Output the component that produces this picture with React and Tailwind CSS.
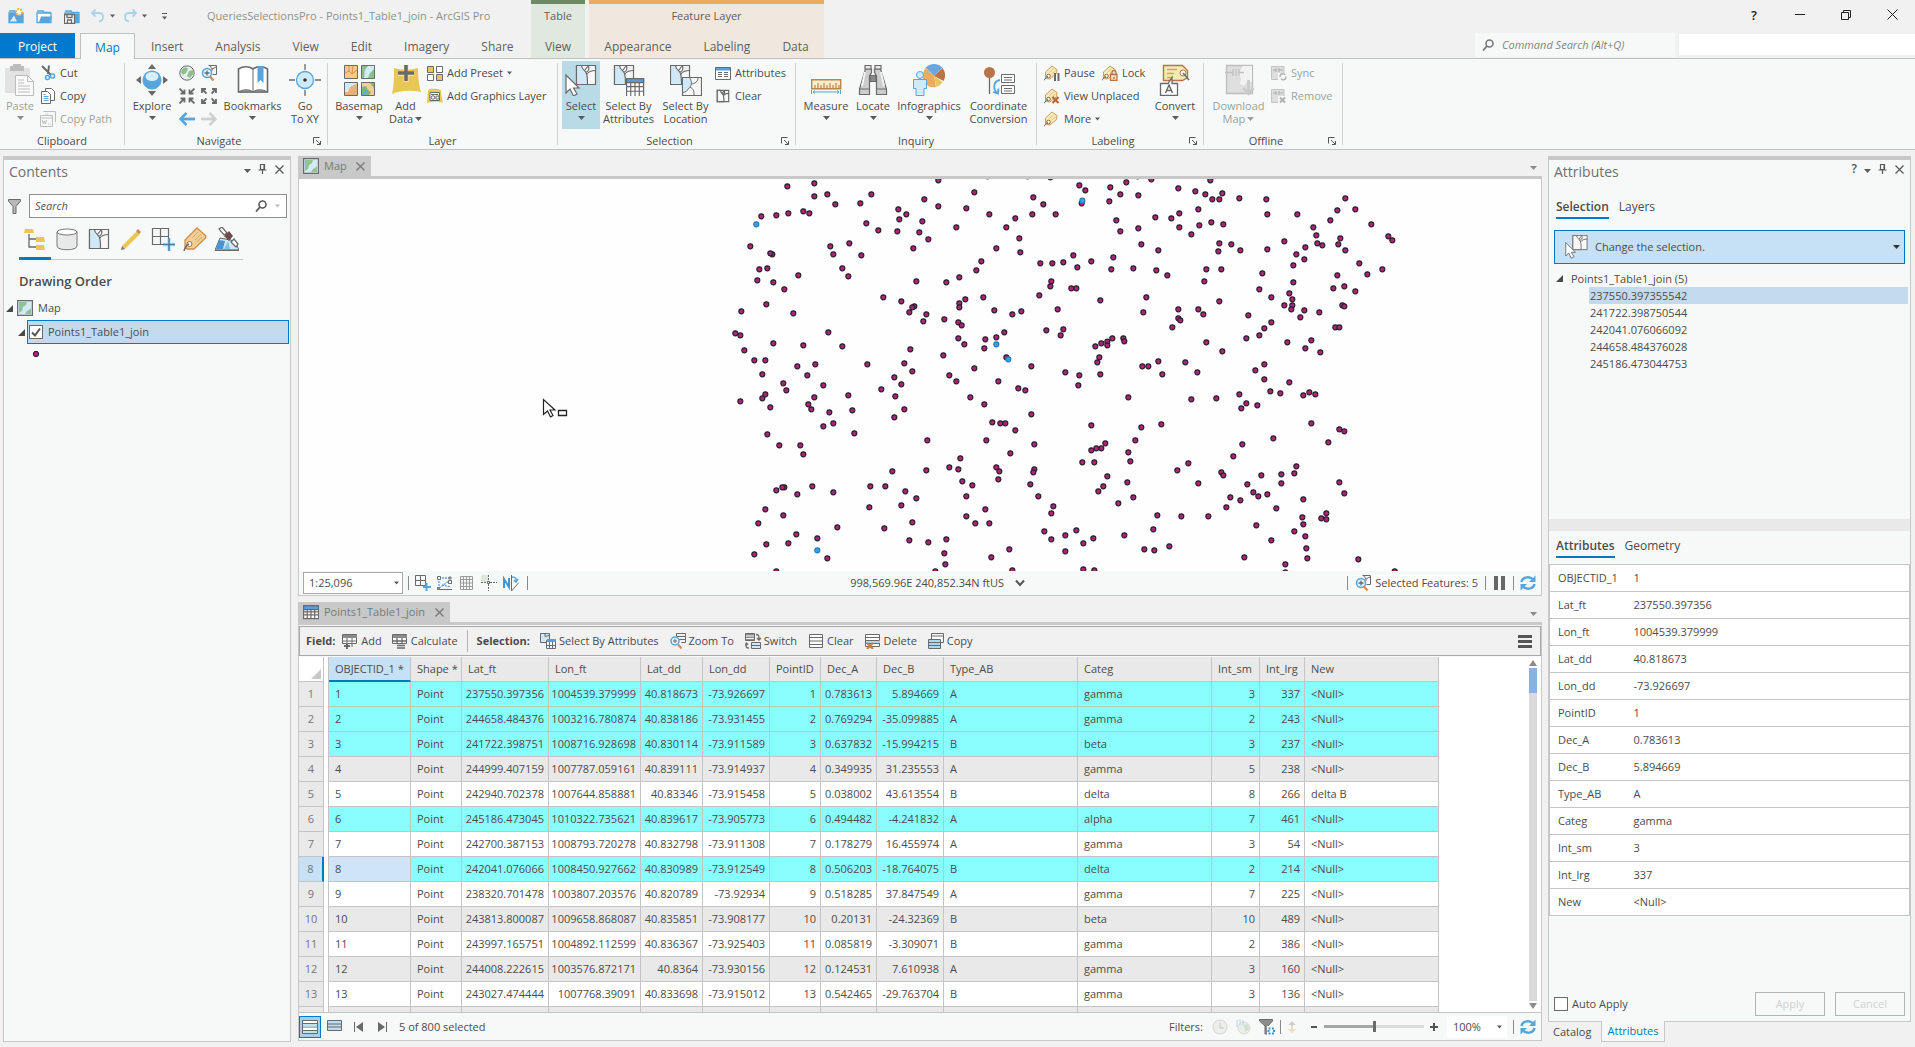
import { useState } from "react";

const INK = "#6a6a6a";
const BLUE = "#56a5dc";
const PALE = "#d0e9f8";

/* ---------- data ---------- */

const columns = [
  { name: "OBJECTID_1", star: true, width: 82 },
  { name: "Shape", star: true, width: 51 },
  { name: "Lat_ft", width: 87, num: true },
  { name: "Lon_ft", width: 92, num: true },
  { name: "Lat_dd", width: 62, num: true },
  { name: "Lon_dd", width: 67, num: true },
  { name: "PointID", width: 51, num: true },
  { name: "Dec_A", width: 56, num: true },
  { name: "Dec_B", width: 67, num: true },
  { name: "Type_AB", width: 134 },
  { name: "Categ", width: 134 },
  { name: "Int_sm", width: 48, num: true },
  { name: "Int_lrg", width: 45, num: true },
  { name: "New", width: 134 },
];

const rows = [
  ["1", "Point", "237550.397356", "1004539.379999", "40.818673", "-73.926697", "1", "0.783613", "5.894669", "A", "gamma", "3", "337", "<Null>"],
  ["2", "Point", "244658.484376", "1003216.780874", "40.838186", "-73.931455", "2", "0.769294", "-35.099885", "A", "gamma", "2", "243", "<Null>"],
  ["3", "Point", "241722.398751", "1008716.928698", "40.830114", "-73.911589", "3", "0.637832", "-15.994215", "B", "beta", "3", "237", "<Null>"],
  ["4", "Point", "244999.407159", "1007787.059161", "40.839111", "-73.914937", "4", "0.349935", "31.235553", "A", "gamma", "5", "238", "<Null>"],
  ["5", "Point", "242940.702378", "1007644.858881", "40.83346", "-73.915458", "5", "0.038002", "43.613554", "B", "delta", "8", "266", "delta B"],
  ["6", "Point", "245186.473045", "1010322.735621", "40.839617", "-73.905773", "6", "0.494482", "-4.241832", "A", "alpha", "7", "461", "<Null>"],
  ["7", "Point", "242700.387153", "1008793.720278", "40.832798", "-73.911308", "7", "0.178279", "16.455974", "A", "gamma", "3", "54", "<Null>"],
  ["8", "Point", "242041.076066", "1008450.927662", "40.830989", "-73.912549", "8", "0.506203", "-18.764075", "B", "delta", "2", "214", "<Null>"],
  ["9", "Point", "238320.701478", "1003807.203576", "40.820789", "-73.92934", "9", "0.518285", "37.847549", "A", "gamma", "7", "225", "<Null>"],
  ["10", "Point", "243813.800087", "1009658.868087", "40.835851", "-73.908177", "10", "0.20131", "-24.32369", "B", "beta", "10", "489", "<Null>"],
  ["11", "Point", "243997.165751", "1004892.112599", "40.836367", "-73.925403", "11", "0.085819", "-3.309071", "B", "gamma", "2", "386", "<Null>"],
  ["12", "Point", "244008.222615", "1003576.872171", "40.8364", "-73.930156", "12", "0.124531", "7.610938", "A", "gamma", "3", "160", "<Null>"],
  ["13", "Point", "243027.474444", "1007768.39091", "40.833698", "-73.915012", "13", "0.542465", "-29.763704", "B", "gamma", "3", "136", "<Null>"],
];

const selectedRows = [1, 2, 3, 6, 8];
const selectedIds = ["237550.397355542", "241722.398750544", "242041.076066092", "244658.484376028", "245186.473044753"];

const attributes = [
  ["OBJECTID_1", "1"],
  ["Lat_ft", "237550.397356"],
  ["Lon_ft", "1004539.379999"],
  ["Lat_dd", "40.818673"],
  ["Lon_dd", "-73.926697"],
  ["PointID", "1"],
  ["Dec_A", "0.783613"],
  ["Dec_B", "5.894669"],
  ["Type_AB", "A"],
  ["Categ", "gamma"],
  ["Int_sm", "3"],
  ["Int_lrg", "337"],
  ["New", "<Null>"],
];

// point positions, three units per screen pixel
const westPoints = [
  [202, 49], [283, 40], [322, 73], [283, 79], [346, 103], [250, 124], [268, 130], [205, 130], [169, 136], [124, 139],
  [454, 73], [421, 100], [439, 160], [475, 181], [91, 229], [157, 253], [151, 250], [142, 295], [118, 298], [112, 331],
  [160, 337], [193, 358], [235, 316], [331, 229], [388, 220], [340, 253], [424, 256], [367, 295], [385, 319], [139, 403],
  [64, 424], [220, 430], [46, 490], [61, 496], [325, 487], [160, 520], [250, 526], [367, 529], [73, 541], [103, 571],
  [136, 571], [127, 613], [232, 589], [286, 583], [262, 616], [310, 646], [190, 640], [199, 661], [136, 673], [127, 685],
  [151, 712], [61, 694], [283, 682], [265, 703], [274, 718], [328, 727], [385, 676], [397, 721], [340, 760], [310, 769],
  [403, 790], [142, 793], [178, 826], [241, 826], [250, 853], [277, 949], [340, 967], [232, 973], [193, 952], [187, 952],
  [169, 961], [136, 1018], [190, 1036], [115, 1060], [229, 1093], [205, 1120], [139, 1123], [103, 1153], [292, 1105], [352, 1072],
  [322, 1165], [169, 1204], [655, 31], [613, 88], [655, 109], [535, 118], [559, 133], [538, 148], [607, 154], [532, 184],
  [598, 187], [625, 208], [580, 235], [763, 67], [739, 115], [808, 133], [709, 172], [886, 145], [859, 172], [940, 82],
  [970, 103], [937, 133], [1007, 133], [898, 205], [901, 247], [829, 235], [784, 274], [769, 301], [718, 322], [679, 337],
  [589, 334], [961, 280], [997, 280], [994, 334], [991, 349], [958, 376], [1013, 418], [490, 382], [544, 394], [583, 409],
  [577, 412], [568, 427], [619, 433], [610, 454], [673, 448], [736, 388], [718, 400], [718, 412], [790, 382], [823, 421],
  [877, 433], [904, 424], [715, 457], [725, 466], [715, 505], [733, 523], [796, 508], [829, 502], [853, 487], [793, 535],
  [979, 481], [571, 538], [553, 580], [577, 604], [523, 622], [544, 643], [442, 583], [484, 658], [526, 679], [553, 718],
  [523, 742], [670, 556], [688, 616], [709, 634], [763, 595], [859, 562], [835, 634], [895, 655], [916, 661], [934, 589],
  [751, 682], [793, 703], [934, 733], [817, 757], [841, 760], [856, 760], [886, 781], [799, 811], [943, 823], [871, 850],
  [622, 811], [721, 865], [688, 892], [715, 898], [619, 901], [517, 904], [829, 892], [838, 904], [835, 928], [727, 934],
  [757, 946], [739, 979], [943, 898], [940, 907], [931, 943], [955, 979], [1000, 1009], [994, 1030], [973, 1084], [994, 1108],
  [451, 949], [496, 949], [556, 964], [589, 985], [544, 1006], [448, 1012], [577, 1057], [493, 1075], [568, 1111], [625, 1117],
  [679, 1108], [673, 1150], [676, 1183], [646, 1204], [796, 1018], [739, 1039], [766, 1060], [808, 1060], [868, 1138], [814, 1162],
  [877, 1201], [991, 22], [803, 19], [923, 19],
];

const eastPoints = [
  [58, 46], [76, 61], [65, 100], [151, 52], [199, 37], [181, 73], [148, 94], [235, 76], [274, 28], [355, 55],
  [406, 64], [436, 73], [451, 31], [457, 88], [478, 88], [487, 70], [538, 85], [619, 88], [622, 133], [712, 133],
  [415, 118], [358, 130], [334, 145], [286, 142], [169, 151], [181, 184], [235, 175], [358, 172], [418, 166], [454, 157],
  [490, 163], [394, 193], [244, 223], [295, 241], [478, 220], [475, 244], [514, 223], [541, 241], [622, 238], [673, 214],
  [856, 85], [886, 118], [832, 121], [811, 151], [934, 163], [985, 199], [997, 211], [760, 172], [769, 196], [772, 220],
  [787, 226], [841, 205], [835, 223], [856, 241], [736, 232], [709, 253], [733, 268], [700, 286], [898, 280], [967, 298],
  [922, 313], [832, 316], [853, 349], [820, 355], [886, 364], [40, 256], [10, 277], [52, 292], [94, 274], [160, 262],
  [154, 298], [220, 295], [289, 301], [322, 316], [439, 298], [484, 298], [433, 334], [607, 310], [598, 358], [700, 337],
  [688, 370], [697, 388], [697, 406], [694, 418], [673, 406], [634, 382], [733, 421], [721, 442], [778, 427], [847, 406],
  [853, 409], [826, 472], [838, 472], [34, 355], [49, 355], [121, 391], [259, 382], [250, 427], [478, 394], [415, 418],
  [430, 433], [355, 418], [355, 445], [361, 451], [337, 472], [565, 436], [634, 457], [613, 475], [598, 496], [559, 505],
  [682, 517], [754, 511], [736, 535], [781, 547], [10, 478], [2, 496], [157, 505], [142, 515], [142, 526], [124, 520],
  [106, 529], [190, 505], [193, 514], [118, 562], [112, 577], [121, 613], [247, 589], [265, 589], [295, 574], [307, 613],
  [376, 577], [412, 607], [439, 517], [487, 544], [16, 607], [58, 616], [55, 646], [205, 682], [613, 583], [586, 601],
  [613, 628], [631, 664], [661, 670], [688, 637], [730, 676], [748, 667], [766, 673], [538, 673], [559, 700], [544, 715],
  [592, 706], [394, 688], [469, 685], [94, 766], [244, 772], [304, 763], [226, 811], [136, 820], [124, 835], [109, 835],
  [94, 841], [205, 847], [211, 874], [67, 877], [103, 877], [547, 823], [640, 805], [520, 859], [754, 760], [838, 778],
  [853, 784], [805, 817], [142, 919], [130, 949], [115, 964], [202, 937], [220, 982], [175, 1000], [352, 901], [385, 880],
  [415, 940], [484, 907], [490, 916], [604, 916], [664, 913], [703, 910], [709, 889], [664, 940], [562, 943], [580, 967],
  [595, 979], [622, 973], [511, 982], [541, 991], [499, 1012], [649, 1015], [730, 988], [838, 937], [853, 970], [727, 1042],
  [730, 1063], [703, 1084], [736, 1099], [739, 1135], [742, 1165], [784, 1045], [799, 1030], [799, 1048], [589, 1066], [634, 1111],
  [292, 1036], [364, 1039], [445, 1039], [280, 1078], [193, 1096], [253, 1138], [283, 1141], [328, 1129], [553, 1162], [676, 1183],
  [676, 1207], [895, 1168], [1004, 1204], [49, 1081], [16, 1096], [100, 1105], [70, 1120], [16, 1144], [70, 1198], [103, 1201],
  [233, 19],
];

/* ---------- icons ---------- */

function Icon({ size = 16, box = 16, className = "", children }) {
  return (
    <svg width={size} height={size} viewBox={`0 0 ${box} ${box}`} fill="none" className={`shrink-0 ${className}`} aria-hidden="true">
      {children}
    </svg>
  );
}

const Big = ({ children }) => <Icon size={32} box={32}>{children}</Icon>;

function Caret({ color = "#5a5a5a", className = "" }) {
  return (
    <svg width="7" height="4" viewBox="0 0 7 4" className={`shrink-0 ${className}`} aria-hidden="true">
      <path d="M0 0h7L3.5 4z" fill={color} />
    </svg>
  );
}

const MapShape = ({ x, y, w, fill = PALE }) => (
  <g transform={`translate(${x} ${y}) scale(${w / 20})`} stroke={INK} strokeWidth={(20 / w) * 1.2}>
    <path d="M.5.5h19v19H.5z" fill="#f7f7f7" />
    <path d="M.5.5h5c0 4 4 5 5 8s1 7 1 11H.5z" fill={fill} />
    <path d="M10.5 9.500c2-3 5-4 9-4M8.500 5.500l4-5M9.500 7c3 0 4-3 3-6" fill="none" />
  </g>
);

const GridShape = ({ x, y, w = 17, h = 18, head = "#5b9bd8" }) => (
  <g transform={`translate(${x} ${y})`} stroke={INK} strokeWidth="1.2">
    <path d={`M.6.6h${w}v${h}H.6z`} fill="#fff" />
    <path d={`M.6.6h${w}v4H.6z`} fill={head} />
    <path d={`M.6 ${4 + (h - 4) * 0.33}h${w}M.6 ${4 + (h - 4) * 0.66}h${w}M${w * 0.28} 4.6v${h - 4}M${w * 0.53} 4.6v${h - 4}M${w * 0.78} 4.6v${h - 4}`} />
  </g>
);

const TagShape = () => (
  <>
    <path d="M1.5 13.5V7L8 1l5 3.500-.5 4L6 14z" fill="#f9e9b8" stroke="#d59a5a" />
    <path d="M5.5 7.500l4-3.500M7.500 9.500l4-3.500" stroke="#e4bd84" />
    <circle cx="4.5" cy="11" r="1.8" fill="#fff" stroke="#8a6a4a" />
    <path d="M0 15.5c1-2 2-3 4-4" stroke={INK} />
  </>
);

const ProjectIcon = ({ kind }) => (
  <Icon>
    <path d="M2 4V3h5l1 1.5h6V7" stroke={BLUE} strokeWidth="1.5" />
    <path d="M1 5h14v9.5H1z" fill={kind === "new" ? BLUE : "#fff"} stroke={BLUE} strokeWidth="1.3" />
    {kind === "new" && <><path d="M2 13.500l4-6 3 6z" fill="#d8eefb" /><circle cx="11" cy="4" r="3" fill="#fff" stroke="#eab73f" strokeWidth="2" strokeDasharray="2 1" /></>}
    {kind === "open" && <path d="M3 14.5l2-6h11l-2 6z" fill={BLUE} />}
    {kind === "save" && <><path d="M11 6h4v9h-4z" fill={BLUE} /><path d="M.5 6.5h10v9H.5zM3 6.5h5v3H3zM3.500 12h4v3.500h-4z" fill="#fff" stroke={INK} strokeWidth="1.3" /></>}
  </Icon>
);

const UndoIcon = ({ flip }) => (
  <Icon className={flip ? "-scale-x-100" : ""}>
    <path d="M5.5 1.500L2 5l3.500 3.500M2 5h7c3 0 4 2 4 4s-1 4-4 4.500" stroke="#a9d3e8" strokeWidth="1.8" />
  </Icon>
);

const PasteIcon = () => (
  <Big>
    <path d="M1 4h25v25H1z" fill="#e2e2e2" />
    <path d="M6 2h3V0h8v2h3v5H6z" fill="#bdbdbd" />
    <path d="M11.5 11.5h12l6 6v14h-18z" fill="#fafafa" stroke="#bdbdbd" />
    <path d="M23.5 11.5v6h6M14 16h6M14 19h6M14 22h12M14 25h12M14 28h12" stroke="#bdbdbd" />
  </Big>
);
const CutIcon = () => (
  <Icon>
    <path d="M2 1l9 9M9 .5L8 9" stroke={INK} strokeWidth="2" />
    <circle cx="7.5" cy="12.5" r="2" stroke={BLUE} strokeWidth="1.5" />
    <circle cx="12.5" cy="11" r="2" stroke={BLUE} strokeWidth="1.5" />
  </Icon>
);
const CopyIcon = () => (
  <Icon>
    <path d="M5.5.5h6l3 3v9h-9z" fill="#fff" stroke={INK} />
    <path d="M1.5 3.5h6l3 3v9h-9z" fill="#fff" stroke={INK} />
    <path d="M3.5 8.5h5M3.5 10.5h5M3.5 12.5h5M3.5 6.5h2" stroke={BLUE} />
  </Icon>
);
const CopyPathIcon = () => (
  <Icon>
    <path d="M3.5.5h12v11M.5 4.5h12v11H.5zM.5 7h12" stroke="#bdbdbd" />
    <path d="M2.5 9l1 4 1-3 1 3 1-4M8 13h1M10 13h1" stroke="#bdbdbd" />
    <path d="M5 3h1M7 3h1" stroke="#bdbdbd" />
  </Icon>
);
const ExploreIcon = () => (
  <Big>
    <path d="M16 0l4 5h-8zM16 32l4-5h-8zM0 16l5-4v8zM32 16l-5-4v8z" fill={INK} />
    <circle cx="16" cy="16" r="9.5" fill={BLUE} />
    <ellipse cx="16" cy="12.5" rx="6.5" ry="4.5" fill="#d8effb" />
  </Big>
);
const GlobeIcon = () => (
  <Icon>
    <circle cx="8" cy="8" r="7.2" fill="#e6eef0" stroke={INK} />
    <path d="M3 4l4-2 2 2-2 4-3 2-2-3zM10 6l4-1v4l-3 4-3-2z" fill="#8fbd8c" />
  </Icon>
);
const ZoomSelIcon = () => (
  <Icon>
    <path d="M7.5.5h8v9h-4M9 1l2 3 4-2M11 4v2" stroke={INK} />
    <circle cx="6" cy="8" r="4.5" fill="#e5f3fb" stroke={BLUE} strokeWidth="1.5" />
    <path d="M3.5 8h5M6 5.5v5" stroke={INK} strokeWidth="1.3" />
    <path d="M9 11.500l3.500 4" stroke="#cf8d4a" strokeWidth="2.2" />
  </Icon>
);
const FixedZoomIcon = ({ out }) => (
  <Icon>
    {[0, 90, 180, 270].map((a) => (
      <g key={a} transform={`rotate(${a} 8 8)`} stroke={INK} strokeWidth="1.8">
        {out ? <path d="M5.5 5.500L1 1M1 5V1h4" /> : <path d="M.5.500L5.500 5.500M5.500 1.500v4h-4" />}
      </g>
    ))}
  </Icon>
);
const ArrowIcon = ({ color, flip }) => (
  <Icon className={flip ? "-scale-x-100" : ""}>
    <path d="M2 8h14" stroke={color} strokeWidth="2.8" />
    <path d="M7.5 2l-6 6 6 6" stroke={color} strokeWidth="2.5" />
  </Icon>
);
const BookIcon = () => (
  <Big>
    <path d="M1.5 5C6 2 12 2 16 5c4-3 10-3 14.5 0v23H1.5z" fill="#fff" stroke={INK} strokeWidth="1.6" />
    <path d="M1.5 28c5-3 11-3 14.5 0 3.500-3 9.500-3 14.500 0z" fill="#9b9b9b" stroke={INK} />
    <path d="M16 5v22" stroke={INK} />
    <path d="M20.5 2h6v17l-3-3-3 3z" fill={BLUE} />
  </Big>
);
const GoToIcon = () => (
  <Big>
    <path d="M16 0v6M16 26v6M0 16h6M26 16h6" stroke={INK} strokeWidth="1.3" />
    <circle cx="16" cy="16" r="8.5" fill={PALE} stroke={BLUE} strokeWidth="1.3" />
    <circle cx="16" cy="16" r="1.8" fill="#333" />
  </Big>
);
const BasemapIcon = () => (
  <Big>
    <g stroke={INK}>
      <path d="M1.5 1.5h13v13h-13z" fill="#f5c98d" />
      <path d="M18.5 1.5h13v13h-13z" fill="#d3ecfa" />
      <path d="M1.5 18.5h13v13h-13z" fill="#e5b083" />
      <path d="M18.5 18.5h13v13h-13z" fill="#f2cf8c" />
    </g>
    <path d="M2 9l4-2 3 3 5-4M6 2v5M10 2l-1 8" stroke="#df8f4a" />
    <path d="M19 2h6l-3 4-1 8h-2zM31 5v9h-6l2-5z" fill="#8cc08a" />
    <path d="M2 19h12l-3 2-4 2-2 5H2z" fill="#d3ecfa" />
    <path d="M19 23l4-1 2 4 3 2-2 3h-7zM27 19h4v5z" fill="#7db57c" />
    <path d="M19 31l5-5" stroke={BLUE} />
  </Big>
);
const AddDataIcon = () => (
  <Big>
    <path d="M4 4c8 2 15 2 24 0 0 10 1 18 3 24-10-2-20-2-29 2C4 22 4 12 4 4z" fill="#e9c757" />
    <path d="M16 1v17M8 9.500h16" stroke="#f3e2a6" strokeWidth="5" />
    <path d="M16 1v16M8 9h16" stroke={INK} strokeWidth="3.5" />
  </Big>
);
const PresetIcon = () => (
  <Icon>
    <g stroke={INK}>
      <path d="M.5 1.5h6v6h-6z" fill="#e9c757" /><path d="M9.5 1.5h6v6h-6z" fill="#fff" />
      <path d="M.5 9.5h6v6h-6z" fill="#fff" /><path d="M9.5 9.5h6v6h-6z" fill="#e9c757" />
    </g>
  </Icon>
);
const GraphicsLayerIcon = () => (
  <Icon>
    <path d="M1 2c5-2 9-1 13 0 0 5 1 9 2 13-6-2-10-1-16 0z" fill="#e9c757" />
    <path d="M3 4.5h9.5v8H3z" fill="#fff" stroke={INK} />
    <circle cx="6" cy="9.5" r="1.8" stroke={INK} /><path d="M9 8h3v3H9zM4 6.5h7" stroke={INK} />
  </Icon>
);
const Pointer = ({ x, y }) => (
  <path transform={`translate(${x} ${y})`} d="M0 0v18l4-4 3.500 7 3.500-2-3.500-6H13z" fill="#fff" stroke={INK} strokeWidth="1.2" />
);
const SelectIcon = () => <Big><MapShape x={11} y={1} w={20} /><Pointer x={1} y={11} /></Big>;
const SelectAttrIcon = () => <Big><MapShape x={1} y={1} w={20} /><GridShape x={13} y={14} /></Big>;
const SelectLocIcon = () => (
  <Big>
    <MapShape x={0} y={1} w={20} />
    <path d="M12.5 13.5h19v18h-19z" fill="#f7f7f7" stroke={INK} strokeWidth="1.2" />
    <path d="M12.5 13.5h7c3 4 2 8 0 10-2 3-4 5-7 5z" fill={PALE} stroke={INK} />
    <path d="M21 20c4 0 7-3 7-6M20 23c4 2 4 5 4 8" stroke={INK} />
  </Big>
);
const TableIcon = () => (
  <Icon>
    <path d="M.5 2.5h15v12H.5z" fill="#fff" stroke={INK} /><path d="M1 3h14v2.500H1z" fill="#5b9bd8" />
    <path d="M3 7.500h4M3 9.500h4M3 11.500h4M9 7.500h4M9 9.500h4M9 11.500h4" stroke={INK} />
  </Icon>
);
const GridIcon = () => <Icon><GridShape x={0} y={1} w={15} h={13} /></Icon>;
const ClearIcon = () => <Icon><MapShape x={2} y={2} w={12} fill="#f7f7f7" /></Icon>;
const MeasureIcon = () => (
  <Big>
    <path d="M1.7 15.7h29v9h-29z" fill="#fbeccb" stroke="#c08445" strokeWidth="1.4" />
    <path d="M5 24v-3M8 24v-5M11 24v-3M14 24v-5M17 24v-3M20 24v-5M23 24v-3M26 24v-5M29 24v-3" stroke="#a87038" />
    <path d="M1.5 26v4M30.5 26v4M3 28h26M5 26.500L3 28l2 1.500M27 26.500l2 1.500-2 1.500" stroke={BLUE} />
  </Big>
);
const LocateIcon = () => (
  <Big>
    <g stroke={INK} strokeWidth="1.2">
      <path d="M8.5 5l-6 20v5.500h10V12l2-3.500V5zM23.500 5l6 20v5.500h-10V12l-2-3.500V5z" fill="#cdcdcd" />
      <path d="M8 1.5h6V5H8zM18 1.5h6V5h-6zM2.5 25h10M19.5 25h10" fill="#e8e8e8" />
      <path d="M13 11.5h6v6h-6z" fill="#8a8a8a" />
    </g>
    <path d="M8 8L5 22M24 8l3 14" stroke="#f2f2f2" strokeWidth="2" />
  </Big>
);
const InfographicsIcon = () => (
  <Big>
    <path d="M21 12L12.5 3.500A12 12 0 0 1 29.500 3.500z" fill="#69a8de" />
    <path d="M21 12l8.500-8a12 12 0 0 1 1 13z" fill="#b87446" /><path d="M21 12l8.500 6a12 12 0 0 1-6 5z" fill="#e9c757" />
    <path d="M21 12l2 11a12 12 0 0 1-12-5c-2-5-1-10 1.500-14z" fill="#edab5e" />
    <circle cx="7" cy="11" r="3.5" fill={PALE} stroke={BLUE} />
    <path d="M.5 15.5h13v9h-2.500v7h-8v-7H.5z" fill={PALE} stroke={BLUE} />
  </Big>
);
const CoordIcon = () => (
  <Big>
    <circle cx="6.5" cy="8.5" r="5.5" fill="#b87446" /><path d="M6.5 14v16" stroke={INK} strokeWidth="1.3" />
    <path d="M17 16c-7 1-7 9-3 13M10 28l5 1.500.500-5" stroke={BLUE} strokeWidth="1.8" />
    <path d="M18.5 10.5h13v8h-13zM18.5 21.5h13v8h-13zM21 13.5h8M21 16h8M21 24.5h8M21 27h8" fill="#fff" stroke={INK} />
  </Big>
);
const LabelIcon = ({ kind }) => (
  <Icon>
    <TagShape />
    {kind === "pause" && <path d="M11 8v8M14.5 8v8" stroke={INK} strokeWidth="2" />}
    {kind === "lock" && <path d="M8.5 9.5h6.500v6H8.500zM10 9V7.500a2 2 0 0 1 4 0V9M12 12v2" fill="#f5dfba" stroke="#b87446" strokeWidth="1.3" />}
    {kind === "x" && <path d="M8.5 9l6 6M14.5 9l-6 6" stroke="#b5683a" strokeWidth="2.2" />}
  </Icon>
);
const ConvertIcon = () => (
  <Big>
    <path d="M4.5 1.5h19l5 5v7l-5 3h-19z" fill="#f6eab4" stroke="#b87446" strokeWidth="1.4" />
    <path d="M8 5.5h10M8 9.5h7M8 13.5h5" stroke="#e39a5b" strokeWidth="1.3" />
    <circle cx="24" cy="9" r="3" fill="#fff" stroke="#b87446" /><path d="M24 9l6 7" stroke={INK} strokeWidth="1.5" />
    <path d="M3 19.5h6l4-6v6h5.500v12H1.500v-12z" fill="#fff" stroke={INK} strokeWidth="1.3" />
    <path d="M6.5 29l3.500-8 3.500 8M8 26.500h4" stroke={INK} strokeWidth="1.5" />
  </Big>
);
const DownloadIcon = () => (
  <Big>
    <path d="M3.5 1.5h26v28h-26z" fill="#dedede" stroke="#bdbdbd" strokeWidth="1.3" />
    <path d="M20 2h9v16h-5l-3 4-4-2 1-6-3-4z" fill="#f2f2f2" /><path d="M2 8.5h8M10 5v7M13 5v7M16 5v7M16 8.5h5" stroke="#c0c0c0" strokeWidth="1.3" />
    <path d="M25.5 16v13M20.5 24l5 6 5-6" stroke="#c9c9c9" strokeWidth="2.5" />
  </Big>
);
const OfflineIcon = ({ x }) => (
  <Icon>
    <path d="M.5 1.5h12.500v13H.5z" fill="#dedede" stroke="#c4c4c4" /><path d="M2 5h3M5 3v4M8 3v4M8 5h4" stroke="#aaa" />
    <path d="M7 8h9v8H7z" fill="#f7f9f8" />
    {x ? <path d="M9 9.500l5 5M14 9.500l-5 5" stroke="#b0b0b0" strokeWidth="2" /> : <path d="M9 12c0-4 4-4 5-2M15 11.500c0 4-4 4-5 2" stroke="#b0b0b0" strokeWidth="1.5" />}
  </Icon>
);
const LauncherIcon = () => (
  <svg width="8" height="8" viewBox="0 0 8 8" fill="none" aria-hidden="true">
    <path d="M.5 6.5v-6h6M3 3l4 4M7.5 4v3.500H4" stroke="#555" />
  </svg>
);
const MapIcon = () => (
  <Icon>
    <path d="M.6.6h14.800v14.800H.6z" fill="#d3e9f7" stroke={INK} strokeWidth="1.2" />
    <path d="M2 2h8l-1 3-3 2-1 4-3 2zM14 8v6H8l2-3 2-1z" fill="#90c38f" />
  </Icon>
);
const SearchIcon = ({ color = "#5a5a5a" }) => (
  <Icon size={12} box={12}><circle cx="7.5" cy="4.5" r="3.5" stroke={color} strokeWidth="1.6" /><path d="M5 7L1 11.500" stroke={color} strokeWidth="1.8" /></Icon>
);
const CloseIcon = ({ color = "#5a5a5a" }) => (
  <Icon size={9} box={9}><path d="M.5.5l8 8M8.5.5l-8 8" stroke={color} strokeWidth="1.3" /></Icon>
);
const PinIcon = () => (
  <Icon size={10} box={10}><path d="M2.5.5h4v5h-4zM6 1v5M.5 6h8M4.5 6v4" stroke="#5a5a5a" strokeWidth="1.2" /></Icon>
);
const Expander = () => (
  <svg width="7" height="7" viewBox="0 0 7 7" className="shrink-0" aria-hidden="true"><path d="M7 0v7H0z" fill="#4a4a4a" /></svg>
);
const FunnelIcon = () => (
  <Icon><path d="M1.5 1.5h12V3L9 8.500v7H6v-7L1.500 3z" fill="#b9b9b9" stroke={INK} /></Icon>
);
const RefreshIcon = () => (
  <Icon>
    <path d="M1.5 7C2 3 8 .5 12.500 4M14.500 9C14 13 8 15.500 3.500 12" stroke={BLUE} strokeWidth="2.4" />
    <path d="M15.5.5V7H9zM.5 15.500V9H7z" fill={BLUE} />
  </Icon>
);

/* contents pane tools, 24px each */
const toolIcons = [
  ["List By Drawing Order", <><path d="M2 2h8l1 4H1zM13 10h8l1 5h-9zM13 18h8l1 5h-9z" fill="#e9c757" /><path d="M6 7v13h7M6 12h7" stroke={INK} strokeWidth="1.3" /></>],
  ["List By Data Source", <><path d="M2 5v14c0 5 20 5 20 0V5z" fill="#e9e9e9" stroke="#777" /><ellipse cx="12" cy="5" rx="10" ry="3" fill="#fff" stroke="#777" /></>],
  ["List By Selection", <MapShape x={2} y={2} w={20} />],
  ["List By Editing", <><path d="M3 19L18 4l3 3L6 22z" fill="#e9c757" /><path d="M2 23l1-4 3 3z" fill="#777" /><path d="M17 4l2-2 3 3-2 2z" fill="#c98c58" /></>],
  ["List By Snapping", <><path d="M1.5 1.5h16v16h-16zM1.5 9.5h16M9.5 1.5v16" stroke={INK} strokeWidth="1.2" /><path d="M18 11v13M12 17.5h12" stroke="#c9e5f6" strokeWidth="4" /><path d="M18 11v13M12 17.5h12" stroke="#3a7cb0" strokeWidth="1.5" /></>],
  ["List By Labeling", <><path d="M2 20v-7L14 1l9 8-.5 2L11 22H4z" fill="#f0cf96" stroke="#cf8d4a" strokeWidth="1.3" /><path d="M9 11l6-6M12 13l6-6M14 15l5-5" stroke="#d9a868" /><circle cx="6.5" cy="17" r="2.5" fill="#fff" stroke="#a8683a" /><path d="M1 24c1-4 3-6 5-7" stroke={INK} strokeWidth="1.5" /></>],
  ["List By Perception", <><path d="M5 11l-5 12h24l-4-9z" fill="#cfe8f7" stroke={INK} /><path d="M4 13l-3 9h7l2-8z" fill="#4b94d3" /><path d="M13 14l2 8h-6z" fill="#7dc1ee" /><path d="M4 2l3-2 5 6-3 2zM16 15l3-3 4 5-2 3z" fill="#fff" stroke={INK} strokeWidth="1.3" /><path d="M9 9l5-5 4 5-4 5z" fill="#6f4a4a" /><path d="M0 23.5h24" stroke={INK} strokeWidth="1.5" /></>],
];

/* ---------- ribbon ---------- */

function BigButton({ icon, lines, caret, inlineCaret, width, disabled, active }) {
  return (
    <button type="button" disabled={disabled} className={`flex h-[68px] flex-col items-center pt-[3px] ${width} ${active ? "bg-[#b9dbe8]" : ""} ${disabled ? "text-[#9aa39b]" : ""}`}>
      {icon}
      <span className="mt-[3px] leading-[13px] whitespace-nowrap">
        {lines.map((line, i) => (
          <span key={line} className="flex items-center justify-center gap-[2px]">
            {line}
            {inlineCaret && i === lines.length - 1 && <Caret color={disabled ? "#9aa39b" : undefined} />}
          </span>
        ))}
      </span>
      {caret && <Caret className="mt-1" color={disabled ? "#8a8a8a" : undefined} />}
    </button>
  );
}

function SmallButton({ icon, children, caret, disabled }) {
  return (
    <button type="button" disabled={disabled} className={`flex h-[23px] items-center gap-1 whitespace-nowrap ${disabled ? "text-[#9aa39b]" : ""}`}>
      {icon}
      {children}
      {caret && <Caret className="w-[5px]" />}
    </button>
  );
}

function Group({ label, width, pad = "", launcher, children }) {
  return (
    <section className={`flex shrink-0 ${width}`} aria-label={label}>
      <div className="flex min-w-0 flex-1 flex-col">
        <div className={`flex h-[73px] items-start pt-[2px] ${pad}`}>{children}</div>
        <div className="flex h-[17px] items-center">
          <span className="flex-1 text-center">{label}</span>
          {launcher && <button type="button" aria-label={`${label} options`} className="mr-[6px]"><LauncherIcon /></button>}
        </div>
      </div>
      <div className="my-1 w-px bg-[#d0d2d1]" />
    </section>
  );
}

function Ribbon() {
  return (
    <div className="flex h-[91px] border-b border-[#bfc1c0] bg-[#f7f9f8]">
      <Group label="Clipboard" width="w-[125px]">
        <BigButton icon={<PasteIcon />} lines={["Paste"]} caret disabled width="w-[40px]" />
        <div>
          <SmallButton icon={<CutIcon />}>Cut</SmallButton>
          <SmallButton icon={<CopyIcon />}>Copy</SmallButton>
          <SmallButton icon={<CopyPathIcon />} disabled>Copy Path</SmallButton>
        </div>
      </Group>
      <Group label="Navigate" width="w-[203px]" launcher>
        <BigButton icon={<ExploreIcon />} lines={["Explore"]} caret width="w-[54px]" />
        <div className="grid grid-cols-2 gap-x-[6px]">
          {[
            ["Full extent", <GlobeIcon />],
            ["Zoom to selection", <ZoomSelIcon />],
            ["Fixed zoom in", <FixedZoomIcon />],
            ["Fixed zoom out", <FixedZoomIcon out />],
            ["Previous extent", <ArrowIcon color={BLUE} />],
            ["Next extent", <ArrowIcon color="#cfcfcf" flip />],
          ].map(([name, icon]) => (
            <button key={name} type="button" aria-label={name} className="flex h-[23px] w-4 items-center">{icon}</button>
          ))}
        </div>
        <BigButton icon={<BookIcon />} lines={["Bookmarks"]} caret width="w-[71px]" />
        <BigButton icon={<GoToIcon />} lines={["Go", "To XY"]} width="w-[34px]" />
      </Group>
      <Group label="Layer" width="w-[230px]" pad="pl-[2px]">
        <BigButton icon={<BasemapIcon />} lines={["Basemap"]} caret width="w-[58px]" />
        <BigButton icon={<AddDataIcon />} lines={["Add", "Data"]} inlineCaret width="w-[35px]" />
        <div className="pl-1">
          <SmallButton icon={<PresetIcon />} caret>Add Preset</SmallButton>
          <SmallButton icon={<GraphicsLayerIcon />}>Add Graphics Layer</SmallButton>
        </div>
      </Group>
      <Group label="Selection" width="w-[238px]" pad="pl-1" launcher>
        <BigButton icon={<SelectIcon />} lines={["Select"]} caret active width="w-[38px]" />
        <BigButton icon={<SelectAttrIcon />} lines={["Select By", "Attributes"]} width="w-[57px]" />
        <BigButton icon={<SelectLocIcon />} lines={["Select By", "Location"]} width="w-[57px]" />
        <div className="pl-px">
          <SmallButton icon={<TableIcon />}>Attributes</SmallButton>
          <SmallButton icon={<ClearIcon />}>Clear</SmallButton>
        </div>
      </Group>
      <Group label="Inquiry" width="w-[241px]" pad="pl-[5px]">
        <BigButton icon={<MeasureIcon />} lines={["Measure"]} caret width="w-[50px]" />
        <BigButton icon={<LocateIcon />} lines={["Locate"]} caret width="w-[44px]" />
        <BigButton icon={<InfographicsIcon />} lines={["Infographics"]} caret width="w-[68px]" />
        <BigButton icon={<CoordIcon />} lines={["Coordinate", "Conversion"]} width="w-[71px]" />
      </Group>
      <Group label="Labeling" width="w-[167px]" pad="pl-[7px]" launcher>
        <div className="w-[107px]">
          <div className="flex gap-[7px]">
            <SmallButton icon={<LabelIcon kind="pause" />}>Pause</SmallButton>
            <SmallButton icon={<LabelIcon kind="lock" />}>Lock</SmallButton>
          </div>
          <SmallButton icon={<LabelIcon kind="x" />}>View Unplaced</SmallButton>
          <SmallButton icon={<LabelIcon />} caret>More</SmallButton>
        </div>
        <BigButton icon={<ConvertIcon />} lines={["Convert"]} caret width="w-[48px]" />
      </Group>
      <Group label="Offline" width="w-[139px]" pad="pl-[2px]" launcher>
        <BigButton icon={<DownloadIcon />} lines={["Download", "Map"]} inlineCaret disabled width="w-[65px]" />
        <div>
          <SmallButton icon={<OfflineIcon />} disabled>Sync</SmallButton>
          <SmallButton icon={<OfflineIcon x />} disabled>Remove</SmallButton>
        </div>
      </Group>
    </div>
  );
}

function TitleBar() {
  const tab = "flex h-[25px] items-center px-4 pt-[3px] text-xs";
  return (
    <header className="flex h-[59px] border-b border-[#bfc1c0]">
      <div className="flex w-[531px] flex-col">
        <div className="flex h-[33px] items-center pb-px pl-2">
          <div className="flex w-[199px] items-center">
            <button type="button" aria-label="New project" className="w-7"><ProjectIcon kind="new" /></button>
            <button type="button" aria-label="Open project" className="w-7"><ProjectIcon kind="open" /></button>
            <button type="button" aria-label="Save project" className="w-[26px]"><ProjectIcon kind="save" /></button>
            <button type="button" aria-label="Undo" className="flex w-8 items-center gap-1"><UndoIcon /><Caret className="w-[5px]" /></button>
            <button type="button" aria-label="Redo" className="flex w-10 items-center gap-1"><UndoIcon flip /><Caret className="w-[5px]" /></button>
            <button type="button" aria-label="Customize toolbar" className="flex flex-col items-center gap-[2px]"><span className="h-px w-[5px] bg-[#5a5a5a]" /><Caret className="w-[5px]" /></button>
          </div>
          <span className="whitespace-nowrap text-[#8b938c]">QueriesSelectionsPro - Points1_Table1_join - ArcGIS Pro</span>
        </div>
        <nav className="flex text-[#5f5f5f]">
          <button type="button" className="h-[25px] w-[75px] bg-[#0079ce] pt-[3px] text-xs text-white">Project</button>
          <button type="button" className="-mb-px ml-[5px] h-[26px] w-[55px] border border-b-0 border-[#bfc1c0] bg-[#f7f9f8] pt-[2px] text-xs text-[#0079c1]">Map</button>
          {["Insert", "Analysis", "View", "Edit", "Imagery", "Share"].map((t) => (
            <button key={t} type="button" className={tab}>{t}</button>
          ))}
        </nav>
      </div>
      <div className="mr-1 flex w-[54px] flex-col items-center justify-between border-t-4 border-[#6c8b62] bg-[#e0e8df] text-[#5f5f5f]">
        <span className="pt-1">Table</span>
        <button type="button" className={tab}>View</button>
      </div>
      <div className="flex w-[235px] flex-col items-center justify-between border-t-4 border-[#edab5e] bg-[#f0e8de] text-[#5f5f5f]">
        <span className="pt-1">Feature Layer</span>
        <div className="flex">
          {["Appearance", "Labeling", "Data"].map((t) => (
            <button key={t} type="button" className={tab}>{t}</button>
          ))}
        </div>
      </div>
      <div className="flex flex-1 flex-col items-end">
        <div className="flex h-[33px] items-center pb-[4px] text-[#222]">
          <button type="button" aria-label="Help" className="w-[46px] text-[13px] font-semibold">?</button>
          <button type="button" aria-label="Minimize" className="flex w-[46px] justify-center"><span className="h-px w-[10px] bg-[#222]" /></button>
          <button type="button" aria-label="Restore" className="flex w-[46px] justify-center">
            <Icon size={10} box={10}><path d="M.5 2.5h7v7h-7zM2.5 2V.5h7v7H8" stroke="#222" /></Icon>
          </button>
          <button type="button" aria-label="Close" className="flex w-[46px] justify-center"><Icon size={11} box={11}><path d="M.5.5l10 10M10.5.5l-10 10" stroke="#222" /></Icon></button>
        </div>
        <div className="flex gap-1">
          <label className="flex h-[24px] w-[200px] items-center gap-2 bg-[#f7f9f8] pl-[7px]">
            <SearchIcon color="#777" />
            <input aria-label="Command Search" placeholder="Command Search (Alt+Q)" className="w-full bg-transparent italic outline-none placeholder:text-[#7f8780]" />
          </label>
          <div className="mt-px h-[21px] w-[236px] bg-white" />
        </div>
      </div>
    </header>
  );
}

/* ---------- panes ---------- */

function PaneHeader({ title, help }) {
  return (
    <div className="flex h-[23px] items-center justify-between pr-[6px] pl-[5px]">
      <h2 className="pt-px text-sm text-[#707070]">{title}</h2>
      <div className="flex items-center gap-[7px] pb-[5px]">
        {help && <button type="button" aria-label="Help" className="text-xs font-semibold text-[#5a5a5a]">?</button>}
        <button type="button" aria-label="Pane menu"><Caret className="mt-1" /></button>
        <button type="button" aria-label="Auto hide"><PinIcon /></button>
        <button type="button" aria-label="Close pane"><CloseIcon /></button>
      </div>
    </div>
  );
}

function Check({ id, checked, onChange }) {
  return (
    <span className="grid size-[14px] shrink-0">
      <input id={id} type="checkbox" checked={checked} onChange={onChange} className="peer col-start-1 row-start-1 size-[14px] appearance-none border border-[#6a6a6a] bg-white" />
      <svg viewBox="0 0 14 14" fill="none" className="pointer-events-none invisible col-start-1 row-start-1 peer-checked:visible" aria-hidden="true">
        <path d="M3 7.500l3 3 5-7" stroke="#555" strokeWidth="2" />
      </svg>
    </span>
  );
}

function ContentsPane() {
  const [visible, setVisible] = useState(true);
  return (
    <aside className="flex w-[288px] shrink-0 flex-col border border-t-4 border-[#c8c8c8] bg-[#f7f9f8]">
      <PaneHeader title="Contents" />
      <div className="mt-[11px] flex items-center gap-[6px] pr-[3px] pl-[3px]">
        <button type="button" aria-label="Filter"><FunnelIcon /></button>
        <label className="flex h-[24px] flex-1 items-center border border-[#8e8e8e] bg-white pr-[6px] pl-[5px]">
          <input aria-label="Search" placeholder="Search" className="min-w-0 flex-1 italic outline-none placeholder:text-[#555]" />
          <SearchIcon />
          <Caret color="#b8b8b8" className="ml-2 w-[5px]" />
        </label>
      </div>
      <div className="mt-2 ml-[15px] flex w-[224px] border-b border-[#c8c8c8]">
        {toolIcons.map(([name, icon], i) => (
          <button key={name} type="button" aria-label={name} className={`-mb-px flex h-[34px] w-8 justify-center pt-px ${i === 0 ? "border-b-[3px] border-[#0079c1]" : ""}`}>
            <Icon size={24} box={24}>{icon}</Icon>
          </button>
        ))}
      </div>
      <h3 className="mt-[11px] ml-[15px] text-[13px] leading-5 font-semibold">Drawing Order</h3>
      <div className="mt-[7px] flex h-[20px] items-center gap-1 pl-[2px]">
        <Expander />
        <MapIcon />
        <span className="pl-px">Map</span>
      </div>
      <div className="mt-[2px] flex items-center gap-[2px] pr-px pl-[14px]">
        <Expander />
        <div className="flex h-[24px] flex-1 items-center gap-[5px] border border-[#0079c1] bg-[#c3daee] pl-px">
          <Check id="layer-visible" checked={visible} onChange={(e) => setVisible(e.target.checked)} />
          <label htmlFor="layer-visible">Points1_Table1_join</label>
        </div>
      </div>
      <svg width="8" height="8" viewBox="0 0 8 8" className="mt-[6px] ml-7" aria-hidden="true"><circle cx="4" cy="4" r="2.7" fill="#b2207f" stroke="#222" /></svg>
    </aside>
  );
}

const Dots = ({ points }) => points.map(([x, y]) => <circle key={`${x}-${y}`} cx={x} cy={y} r="7.5" />);

function MapCanvas() {
  return (
    <svg className="h-0 w-full flex-1 bg-[#fefefe]" aria-label="Map">
      <g fill="#b2207f" stroke="#2a2228" strokeWidth="3.5">
        <g transform="translate(421 -9) scale(.33333)"><Dots points={westPoints} /></g>
        <g transform="translate(761 -9) scale(.33333)"><Dots points={eastPoints} /></g>
      </g>
      <g transform="translate(421 -9) scale(.33333)" fill="#3f9fe2" stroke="#1f7cc2" strokeWidth="3.5">
        <Dots points={[[109, 163], [829, 523], [865, 568], [292, 1141], [1087, 92]]} />
      </g>
      <g transform="translate(244 220)" stroke="#222">
        <path d="M.5.5v15l4-3.500 3 6 2.500-1.500-3-5.500h5z" fill="#fff" strokeWidth="1.2" />
        <path d="M15.5 11.5h8v5h-8z" fill="#fff" strokeWidth="1.3" />
      </g>
    </svg>
  );
}

const VLine = ({ className = "" }) => <span className={`h-[14px] w-px shrink-0 bg-[#8a8a8a] ${className}`} />;

function DocTab({ icon, label, width }) {
  return (
    <div className="flex h-[23px] items-start justify-between border-b-[3px] border-[#c8c8c8]">
      <div className={`flex h-[20px] items-center bg-[#c8c8c8] pl-[5px] text-[#737b75] ${width}`}>
        {icon}
        <span className="ml-[5px] flex-1">{label}</span>
        <button type="button" aria-label={`Close ${label}`} className="mr-[6px]"><CloseIcon color="#777" /></button>
      </div>
      <button type="button" aria-label="Open views" className="mt-[10px] mr-[5px] flex"><Caret color="#8a8a8a" /></button>
    </div>
  );
}

function MapPane() {
  return (
    <section className="flex min-h-0 flex-1 flex-col">
      <DocTab icon={<MapIcon />} label="Map" width="w-[73px]" />
      <div className="flex min-h-0 flex-1 flex-col border border-t-0 border-[#c8c8c8]">
        <MapCanvas />
        <div className="flex h-[24px] items-center bg-[#f7f9f8] pr-[5px] pl-1">
          <div className="grid w-[100px] items-center">
            <select aria-label="Map scale" className="col-start-1 row-start-1 h-[22px] appearance-none border border-[#a8a8a8] bg-white pl-[5px] outline-none">
              <option>1:25,096</option>
            </select>
            <Caret className="pointer-events-none col-start-1 row-start-1 mr-1 w-[5px] justify-self-end" />
          </div>
          <VLine className="mx-[5px]" />
          <div className="flex items-center gap-[6px] pl-px">
            <button type="button" aria-label="Snapping">
              <Icon><path d="M.5.5h10v10h-10zM5.5.5v10M.5 5.5h10" stroke={INK} /><path d="M11.5 8v8M8 12h8" stroke={BLUE} strokeWidth="2" /></Icon>
            </button>
            <button type="button" aria-label="Dynamic constraints">
              <Icon><path d="M2 3h10M2 13l10-7M2 6v6M5 10l9 2" stroke="#5b9bd8" strokeWidth="1.3" strokeDasharray="2 1" /><path d="M.5 1.5h3v3h-3zM11.5 5.5h3v3h-3z" fill="#fff" stroke={INK} /><path d="M3 14.5h12M13 1v4M11 3h4" stroke={INK} /><path d="M0 12h3v3H0z" fill="#6c8b62" /></Icon>
            </button>
            <button type="button" aria-label="Grid">
              <Icon><path d="M1.5 1.5h12v13h-12zM1.5 4.5h12M1.5 8h12M1.5 11.5h12M4.5 1.5v13M7.5 1.5v13M10.5 1.5v13" stroke="#9a9a9a" /></Icon>
            </button>
            <button type="button" aria-label="Corrections">
              <Icon><path d="M0 0h7v7H0z" fill="#dce8d8" /><path d="M7.5 0v16M0 7.500h16" stroke={INK} strokeDasharray="2 1" /><path d="M6.5 6.5h2v2h-2z" fill="#fff" stroke={INK} /></Icon>
            </button>
            <button type="button" aria-label="Map rotation">
              <Icon><path d="M1 13V4l5 8V3" stroke="#3f94d6" strokeWidth="2" /><path d="M8.5 0v16l7-8" stroke={INK} /><path d="M9 2c4 0 5 2 4 5M11 5l2 2 2-3" stroke={BLUE} strokeWidth="1.5" /></Icon>
            </button>
          </div>
          <VLine className="ml-2" />
          <div className="flex flex-1 items-center justify-center gap-[11px]">
            <span>998,569.96E 240,852.34N ftUS</span>
            <Icon size={10} box={10}><path d="M1 2.500l4 4.500 4-4.500" stroke="#555" strokeWidth="2" /></Icon>
          </div>
          <VLine />
          <button type="button" className="mx-[5px] flex items-center gap-1 bg-[#fdfdfd] px-[2px]"><ZoomSelIcon />Selected Features: 5</button>
          <VLine />
          <button type="button" aria-label="Pause drawing" className="mx-2 flex gap-[3px]"><span className="h-[14px] w-1 bg-[#666]" /><span className="h-[14px] w-1 bg-[#666]" /></button>
          <VLine />
          <button type="button" aria-label="Refresh" className="ml-[6px]"><RefreshIcon /></button>
        </div>
      </div>
    </section>
  );
}

const toolbarIcons = {
  Add: <><path d="M.5 1.5h14v9h-14z" fill="#fff" stroke={INK} /><path d="M1 2h14v3H1z" fill="#8a8a8a" /><path d="M1 8h14M5 5v6M10 5v9" stroke={INK} /><path d="M5 10v6M2 13h6" stroke={INK} strokeWidth="2" /></>,
  Calculate: <><path d="M.5 1.5h14v9h-14z" fill="#fff" stroke={INK} /><path d="M1 2h14v3H1z" fill="#8a8a8a" /><path d="M1 8h14M5 5v6M10 5v6M5 12.5h8M5 15h8" stroke={INK} strokeWidth="1.3" /></>,
  "Select By Attributes": <><path d="M.5.5h9v9h-9z" fill={PALE} stroke={INK} /><path d="M5 .5v3l4-1" stroke={INK} /><path d="M6.5 7.5h9v8h-9zM6.5 12.5h9M9.5 9v6M12.5 9v6" fill="#fff" stroke={INK} /><path d="M7 6h9v3H7z" fill="#5b9bd8" /></>,
  "Zoom To": <><path d="M6.5.5h9v3h-9zM8.5 3.5h7v6h-4M9 6.5h6" stroke={INK} /><circle cx="5" cy="8" r="4" fill="#e5f3fb" stroke={BLUE} strokeWidth="1.5" /><path d="M3 8h4M5 6v4" stroke={INK} /><path d="M8 11.500l3.500 4" stroke="#cf8d4a" strokeWidth="2" /></>,
  Switch: <><path d="M.5.5h9v7h-9z" fill="#8a8a8a" stroke={INK} /><path d="M1 3h8M1 5.5h8" stroke="#fff" /><path d="M6.5 9.5h9v6h-9zM6.5 12.5h9" fill={PALE} stroke={INK} /><path d="M11 1.5c3 0 3 1 3 5M12 5l2 2 2-2M4 15c-3 0-3-1-3-4M0 12l1.500-2L3 12" stroke={INK} strokeWidth="1.3" /></>,
  Clear: <path d="M1.5 1.5h13v13h-13zM1.5 4.5h13M1.5 8h13M1.5 11.5h13" fill="#fff" stroke={INK} />,
  Delete: <><path d="M.5 1.5h14v12h-14z" fill="#fff" stroke={INK} /><path d="M1 7h14v3H1z" fill="#a9d8f0" /><path d="M.5 4.5h14M.5 7.5h14M.5 10.5h14" stroke={INK} /><path d="M2 10l6 6M8 10l-6 6" stroke="#cf7a3a" strokeWidth="2" /></>,
  Copy: <><path d="M3.5.5h12v9h-12zM3.5 3h12" fill="#fff" stroke={INK} /><path d="M.5 6.5h12v9h-12z" fill="#a9d8f0" stroke={INK} /><path d="M.5 9.5h12M.5 12.5h12" stroke={INK} /></>,
};

function ToolButton({ name }) {
  return (
    <button type="button" className="flex items-center gap-[3px] whitespace-nowrap">
      <Icon>{toolbarIcons[name]}</Icon>
      {name}
    </button>
  );
}

function AttributeTable() {
  return (
    <div className="flex h-[356px] justify-between overflow-hidden border-b border-[#c4c4c4] bg-white">
      <div className="overflow-hidden">
        <table className="w-[1140px] table-fixed border-separate border-spacing-0">
          <colgroup>
            <col className="w-[25px]" />
            <col className="w-[5px]" />
            {columns.map((c) => <col key={c.name} style={{ width: c.width }} />)}
          </colgroup>
          <thead>
            <tr className="h-[25px]">
              <th className="border-r border-b border-[#c4c4c4] bg-white align-bottom">
                <svg width="10" height="10" viewBox="0 0 10 10" className="mr-[2px] mb-[2px] ml-auto" aria-label="Select all"><path d="M10 0v10H0z" fill="#c8c8c8" /></svg>
              </th>
              <th className="border-r border-[#c4c4c4]" />
              {columns.map((c, i) => (
                <th key={c.name} className={`overflow-hidden border-r border-[#c4c4c4] pl-[6px] text-left font-normal whitespace-nowrap ${i === 0 ? "border-b-2 border-b-[#0079c1] bg-[#c6e1f5]" : "border-b bg-[#e9e9e9]"}`}>
                  {c.name}{c.star && " *"}
                </th>
              ))}
            </tr>
          </thead>
          <tbody>
            {rows.map((row, i) => {
              const id = i + 1;
              const bg = selectedRows.includes(id) ? "bg-[#89fefe]" : id % 2 === 0 ? "bg-[#e9e9e9]" : "bg-white";
              return (
                <tr key={id} className={`h-[25px] ${bg}`}>
                  <th className={`border-b border-[#c4c4c4] text-center font-normal text-[#777] ${id === 8 ? "border-r-2 border-r-[#0079c1] bg-[#c6e1f5]" : "border-r bg-[#e9e9e9]"}`}>{id}</th>
                  <td className="border-r border-[#c4c4c4] bg-white" />
                  {row.map((v, c) => (
                    <td key={c} className={`border-r border-b border-[#c4c4c4] whitespace-nowrap ${columns[c].num ? "pr-1 text-right" : "pl-[6px]"} ${id === 8 && c === 0 ? "bg-[#cfe5f7]" : ""}`}>{v}</td>
                  ))}
                </tr>
              );
            })}
            <tr className="h-[25px] bg-[#e9e9e9]">
              <td className="border-r border-[#c4c4c4]" />
              <td className="border-r border-[#c4c4c4] bg-white" />
              {columns.map((c) => <td key={c.name} className="border-r border-[#c4c4c4]" />)}
            </tr>
          </tbody>
        </table>
      </div>
      <div className="mr-[4px] flex w-[8px] shrink-0 flex-col items-center justify-between py-[2px]" aria-hidden="true">
        <Icon size={8} box={8}><path d="M4 1l4 6H0z" fill="#8a8a8a" /></Icon>
        <div className="my-px w-[8px] flex-1 bg-[#dadada]"><div className="h-[25px] bg-[#86b3e0]" /></div>
        <Icon size={8} box={8}><path d="M4 7l4-6H0z" fill="#8a8a8a" /></Icon>
      </div>
    </div>
  );
}

function TablePane() {
  const [zoom, setZoom] = useState(50);
  return (
    <section className="flex shrink-0 flex-col">
      <DocTab icon={<GridIcon />} label="Points1_Table1_join" width="w-[152px]" />
      <div className="border border-t-0 border-[#c8c8c8] bg-[#f7f9f8]">
        <div className="my-px flex h-[30px] items-center border border-[#a8a8a8] bg-[#f1f1f1] px-[6px]">
          <span className="mr-[7px] font-bold">Field:</span>
          <div className="flex gap-[10px]"><ToolButton name="Add" /><ToolButton name="Calculate" /></div>
          <span className="mx-[9px] h-[22px] w-px bg-[#b4b4b4]" />
          <span className="mr-[10px] font-bold">Selection:</span>
          <div className="flex flex-1 gap-[11px]">
            {["Select By Attributes", "Zoom To", "Switch", "Clear", "Delete", "Copy"].map((n) => <ToolButton key={n} name={n} />)}
          </div>
          <button type="button" aria-label="Menu" className="mr-[2px] flex flex-col gap-[2px]">
            <span className="h-[3px] w-[14px] bg-[#555]" /><span className="h-[3px] w-[14px] bg-[#555]" /><span className="h-[3px] w-[14px] bg-[#555]" />
          </button>
        </div>
        <AttributeTable />
        <div className="flex h-[27px] items-center pr-[5px]">
          <button type="button" aria-label="Show all records" className="flex size-[22px] items-center justify-center border border-[#0079c1] bg-[#a5cfe8]">
            <Icon><path d="M.5 1.5h15v13H.5zM.5 4.5h15M.5 8h15M.5 11.5h15" fill="#fff" stroke={INK} /><path d="M1 5h14v2.500H1zM1 12h14v2H1z" fill="#b5e4f5" /></Icon>
          </button>
          <button type="button" aria-label="Show selected records" className="ml-[6px] pb-1">
            <Icon><path d="M.5 3.5h14v10h-14zM.5 7h14M.5 10h14" fill="#bcdcf2" stroke={INK} /></Icon>
          </button>
          <button type="button" aria-label="First record" className="ml-[11px]"><Icon size={10} box={10}><path d="M.5 0v10" stroke={INK} /><path d="M9 0v10L2 5z" fill={INK} /></Icon></button>
          <button type="button" aria-label="Last record" className="ml-[13px]"><Icon size={10} box={10}><path d="M9.5 0v10" stroke={INK} /><path d="M1 0v10l7-5z" fill={INK} /></Icon></button>
          <span className="ml-3 flex-1">5 of 800 selected</span>
          <span className="mr-[9px]">Filters:</span>
          <button type="button" aria-label="Filter by time" disabled className="mr-[7px]">
            <Icon><circle cx="8" cy="8" r="7" fill="#eeeeec" stroke="#d5d5d2" /><path d="M8 4v5h4" stroke="#d0d0cc" strokeWidth="1.3" /></Icon>
          </button>
          <button type="button" aria-label="Filter by range" disabled className="mr-2">
            <Icon><circle cx="9" cy="9" r="6" fill="#eaefe9" stroke="#d5dbd6" /><path d="M2 1v7M5 0v6M8 1v6" stroke="#b9d4e6" /><path d="M9 6l4-1 1 5-4 3z" fill="#cfe0cf" /></Icon>
          </button>
          <button type="button" aria-label="Filter by extent">
            <Icon><path d="M.5.5h13V2L9 7v8H6V7L.5 2z" fill="#8d8d8d" stroke={INK} /><path d="M8 7h8v9H8z" fill="#f7f9f8" /><path d="M9.5 9.500h5.500v5H9.500z" stroke="#3f94d6" strokeWidth="2" strokeDasharray="2 1.5" /></Icon>
          </button>
          <VLine className="mx-[5px]" />
          <Icon size={12} box={12}><path d="M6 0l4 4H7v4H5V4H2z" fill="#cfcfcf" /><path d="M5 5h2v3h3l-4 4-4-4h3z" fill="#ecdcc0" /></Icon>
          <button type="button" aria-label="Zoom out" className="ml-3 flex"><Icon size={8} box={8}><path d="M1 4h6" stroke="#555" strokeWidth="2" /></Icon></button>
          <input
            type="range"
            aria-label="Table zoom"
            value={zoom}
            onChange={(e) => setZoom(e.target.value)}
            className="mx-[6px] h-[12px] w-[100px] appearance-none bg-transparent [&::-webkit-slider-runnable-track]:h-[3px] [&::-webkit-slider-runnable-track]:bg-linear-to-r [&::-webkit-slider-runnable-track]:from-[#a5a5a5] [&::-webkit-slider-runnable-track]:from-50% [&::-webkit-slider-runnable-track]:to-[#dadada] [&::-webkit-slider-runnable-track]:to-50% [&::-webkit-slider-thumb]:-mt-1 [&::-webkit-slider-thumb]:h-[11px] [&::-webkit-slider-thumb]:w-[3px] [&::-webkit-slider-thumb]:appearance-none [&::-webkit-slider-thumb]:bg-[#6a6a6a]"
          />
          <button type="button" aria-label="Zoom in" className="flex"><Icon size={8} box={8}><path d="M0 4h8M4 0v8" stroke="#555" strokeWidth="2" /></Icon></button>
          <div className="ml-[9px] grid w-[60px] items-center">
            <select aria-label="Zoom level" className="col-start-1 row-start-1 h-[22px] appearance-none bg-white pl-[6px] outline-none">
              <option>100%</option>
            </select>
            <Caret className="pointer-events-none col-start-1 row-start-1 mr-[5px] w-[5px] justify-self-end" />
          </div>
          <VLine className="mx-[6px]" />
          <button type="button" aria-label="Refresh table"><RefreshIcon /></button>
        </div>
      </div>
    </section>
  );
}

function TabPair({ first, second }) {
  return (
    <div className="flex h-[22px] gap-[10px] pl-[7px] text-xs">
      <button type="button" className="border-b-2 border-[#0079c1] font-semibold">{first}</button>
      <button type="button" className="border-b-2 border-transparent">{second}</button>
    </div>
  );
}

function AttributesPane() {
  const [auto, setAuto] = useState(false);
  return (
    <aside className="flex w-[363px] shrink-0 flex-col">
      <div className="flex flex-1 flex-col border border-t-4 border-[#c8c8c8] bg-[#f7f9f8]">
        <PaneHeader title="Attributes" help />
        <div className="mt-[14px]"><TabPair first="Selection" second="Layers" /></div>
        <button type="button" className="mx-[5px] mt-[11px] flex h-[34px] items-center border border-[#0079c1] bg-[#c6e1f5] pr-1 pl-[10px]">
          <Icon size={24} box={32}><MapShape x={10} y={0} w={20} fill="#f7f7f7" /><Pointer x={1} y={10} /></Icon>
          <span className="ml-[6px] flex-1 text-left">Change the selection.</span>
          <Caret color="#333" />
        </button>
        <div className="mt-[6px] flex h-[17px] items-center gap-2 pl-[7px]"><Expander /><span>Points1_Table1_join (5)</span></div>
        <ul className="pr-[2px] pl-[40px]">
          {selectedIds.map((id, i) => (
            <li key={id} className={`h-[17px] pl-px leading-[17px] ${i === 0 ? "bg-[#c3daee]" : ""}`}>{id}</li>
          ))}
        </ul>
        <div className="mt-[147px] h-3 bg-[#e9e9e9]" />
        <div className="mt-[5px]"><TabPair first="Attributes" second="Geometry" /></div>
        <table className="mt-[6px] w-full border-collapse bg-white">
          <tbody>
            {attributes.map(([name, value]) => (
              <tr key={name} className="h-[27px] border border-[#c4c4c4]">
                <th scope="row" className="w-[84px] pl-2 text-left font-normal">{name}</th>
                <td>{value}</td>
              </tr>
            ))}
          </tbody>
        </table>
        <div className="mt-auto flex items-center gap-[10px] px-[5px] pb-[5px]">
          <div className="flex flex-1 items-center gap-1">
            <Check id="auto-apply" checked={auto} onChange={(e) => setAuto(e.target.checked)} />
            <label htmlFor="auto-apply">Auto Apply</label>
          </div>
          <button type="button" disabled className="h-[24px] w-[70px] border border-[#b4b4b4] text-[#cfd2d0]">Apply</button>
          <button type="button" disabled className="h-[24px] w-[70px] border border-[#b4b4b4] text-[#cfd2d0]">Cancel</button>
        </div>
      </div>
      <div className="-mt-px flex h-[21px] pl-[5px]">
        <button type="button" className="w-[48px] text-left">Catalog</button>
        <button type="button" className="w-[64px] border border-t-0 border-[#c8c8c8] bg-[#f7f9f8] text-[#0079c1]">Attributes</button>
      </div>
    </aside>
  );
}

export default function App() {
  return (
    <div className="flex h-screen min-h-[900px] flex-col overflow-hidden bg-[#f1f1f1] font-['Open_Sans','Noto_Sans',sans-serif] text-[11px] leading-4 text-[#4c4c4c]">
      <TitleBar />
      <Ribbon />
      <main className="flex min-h-0 flex-1 pt-[6px] pr-1 pb-[5px] pl-[3px]">
        <ContentsPane />
        <div className="mr-[6px] ml-[7px] flex min-w-0 flex-1 flex-col gap-[6px] pb-px">
          <MapPane />
          <TablePane />
        </div>
        <AttributesPane />
      </main>
    </div>
  );
}
